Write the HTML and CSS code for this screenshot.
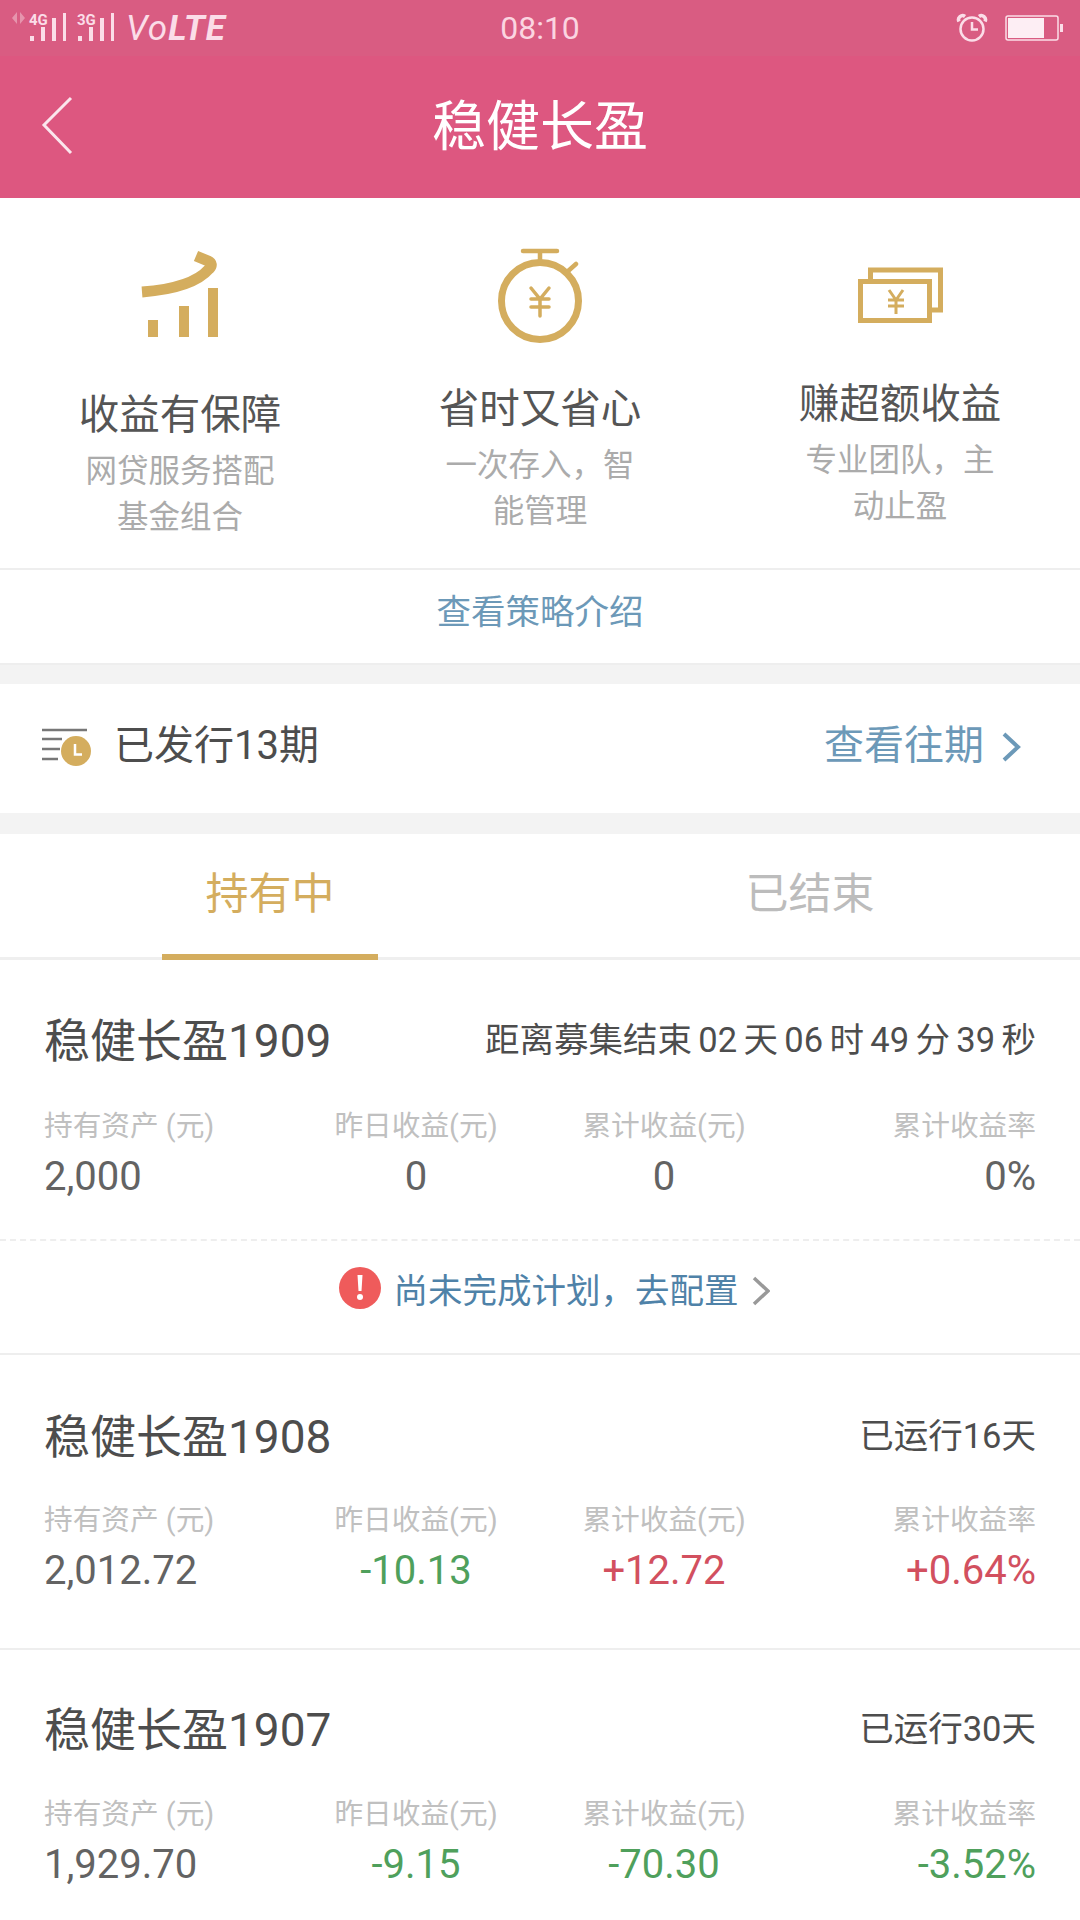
FILE: index.html
```html
<!DOCTYPE html>
<html lang="zh-CN">
<head>
    <meta charset="UTF-8">
    <meta name="viewport" content="width=device-width, initial-scale=1.0">
    <title>稳健长盈</title>
    <link rel="stylesheet" href="styles.css">
</head>
<body>

    <div class="statusbar">
        <div class="status-left">
            <svg class="net-arrows" width="14" height="12" viewBox="0 0 14 12"><path d="M5 0v12L0 6zM8 0l5 6-5 6z" fill="#fff" opacity=".35"/></svg>
            <div class="signal">
                <span class="signal-name">4G</span>
                <svg width="38" height="30" viewBox="0 0 38 30"><path d="M2 23h4v5H2zM13 14h4v14h-4zM24 5h4v23h-4zM35 0h3v28h-3z" fill="#fbdde8"/></svg>
            </div>
            <div class="signal">
                <span class="signal-name">3G</span>
                <svg width="38" height="30" viewBox="0 0 38 30"><path d="M2 23h4v5H2zM13 14h4v14h-4zM24 5h4v23h-4zM35 0h3v28h-3z" fill="#fbdde8"/></svg>
            </div>
            <span class="volte">Vo<b>LTE</b></span>
        </div>
        <div class="status-time">08:10</div>
        <div class="status-right">
            <svg width="32" height="30" viewBox="0 0 32 30" fill="none" stroke="#fbdde8"><circle cx="16" cy="16" r="11.5" stroke-width="2.5"/><path d="M16 9v7.5h6" stroke-width="2.5"/><path d="M3 8.500a4 4 0 0 1 6-5M29 8.500a4 4 0 0 0-6-5" stroke-width="3.500"/></svg>
            <svg width="58" height="26" viewBox="0 0 58 26"><rect x="1" y="1" width="52" height="24" rx="2" fill="none" stroke="#fbdde8" stroke-width="1.500"/><rect x="3" y="3" width="36" height="20" fill="#fdeef4"/><rect x="55" y="9" width="3" height="8" fill="#fbdde8"/></svg>
        </div>
    </div>

    <div class="header">
        <svg class="back" width="34" height="62" viewBox="0 0 34 62"><path d="M30 3 3 30l27 28" fill="none" stroke="#fbe6ed" stroke-width="3"/></svg>
        <h1>稳健长盈</h1>
    </div>

    <div class="features">
        <div class="feature feature-a">
            <svg width="80" height="100" viewBox="140 245 80 100" fill="#d4ad5e">
                <path d="M148 320h10v17h-10zM179 306h10v31h-10zM208 288h10v49h-10z"/>
                <path d="M196 256l12 5q6 3 1 8c-13 15-41 21-67 23" fill="none" stroke="#d4ad5e" stroke-width="11"/>
            </svg>
            <h3>收益有保障</h3>
            <p>网贷服务搭配基金组合</p>
        </div>
        <div class="feature feature-b">
            <svg width="90" height="100" viewBox="495 245 90 100" fill="none" stroke="#d4ad5e" stroke-linecap="round">
                <circle cx="540" cy="301" r="38.500" stroke-width="7"/>
                <path d="M523 251h34M540 251v10M567 272l9-8" stroke-width="4.500"/>
                <path d="M531 288l9 11 9-11M531 299h18M531 307h18M540 299v17" stroke-width="3.500"/>
            </svg>
            <h3>省时又省心</h3>
            <p>一次存入，智能管理</p>
        </div>
        <div class="feature feature-c">
            <svg width="90" height="100" viewBox="855 245 90 100" fill="none" stroke="#d4ad5e">
                <path d="M870.500 279v-9h70v40h-9" stroke-width="5"/>
                <rect x="860.500" y="281.500" width="69" height="39" stroke-width="5"/>
                <path d="M889 290l7 10 7-10M888 300h16M888 306h16M896 300v14" stroke-width="3"/>
            </svg>
            <h3>赚超额收益</h3>
            <p>专业团队，主动止盈</p>
        </div>
    </div>
    <div class="strategy-link">查看策略介绍</div>

    <div class="issued">
        <svg class="issued-icon" width="54" height="54" viewBox="40 724 54 54">
            <path d="M42 730h45M42 739h20M42 749h18M42 759h16" stroke="#777" stroke-width="2.500" fill="none"/>
            <circle cx="76" cy="751" r="15" fill="#d4ad5e"/>
            <path d="M75 744v10.500h7" stroke="#fff" stroke-width="2.500" fill="none"/>
        </svg>
        <span class="issued-text">已发行13期</span>
        <span class="issued-more">查看往期
            <svg width="20" height="32" viewBox="0 0 20 32"><path d="M3 3l14 13L3 29" fill="none" stroke="#6c99b8" stroke-width="4"/></svg>
        </span>
    </div>

    <div class="tabs">
        <div class="tab active">持有中</div>
        <div class="tab">已结束</div>
    </div>

    <div class="card card-first">
        <div class="card-head">
            <h2>稳健长盈1909</h2>
            <span class="card-note countdown">距离募集结束 02 天 06 时 49 分 39 秒</span>
        </div>
        <div class="stats">
            <div class="stat"><span>持有资产 (元)</span><strong>2,000</strong></div>
            <div class="stat"><span>昨日收益(元)</span><strong>0</strong></div>
            <div class="stat"><span>累计收益(元)</span><strong>0</strong></div>
            <div class="stat"><span>累计收益率</span><strong>0%</strong></div>
        </div>
    </div>
    <div class="plan-alert">
        <svg width="42" height="42" viewBox="0 0 42 42"><circle cx="21" cy="21" r="21" fill="#ef5b5b"/><path d="M18.500 8h5l-1 16h-3z" fill="#fff"/><circle cx="21" cy="30" r="3" fill="#fff"/></svg>
        <span>尚未完成计划，去配置</span>
        <svg class="plan-arrow" width="18" height="30" viewBox="0 0 18 30"><path d="M2 2l14 13L2 28" fill="none" stroke="#999" stroke-width="3.500"/></svg>
    </div>

    <div class="card">
        <div class="card-head">
            <h2>稳健长盈1908</h2>
            <span class="card-note">已运行16天</span>
        </div>
        <div class="stats">
            <div class="stat"><span>持有资产 (元)</span><strong>2,012.72</strong></div>
            <div class="stat"><span>昨日收益(元)</span><strong class="down">-10.13</strong></div>
            <div class="stat"><span>累计收益(元)</span><strong class="up">+12.72</strong></div>
            <div class="stat"><span>累计收益率</span><strong class="up">+0.64%</strong></div>
        </div>
    </div>

    <div class="card">
        <div class="card-head">
            <h2>稳健长盈1907</h2>
            <span class="card-note">已运行30天</span>
        </div>
        <div class="stats">
            <div class="stat"><span>持有资产 (元)</span><strong>1,929.70</strong></div>
            <div class="stat"><span>昨日收益(元)</span><strong class="down">-9.15</strong></div>
            <div class="stat"><span>累计收益(元)</span><strong class="down">-70.30</strong></div>
            <div class="stat"><span>累计收益率</span><strong class="down">-3.52%</strong></div>
        </div>
    </div>

</body>
</html>
```

FILE: styles.css
```css
/* Página do produto */
* {
    box-sizing: border-box;
}

html, body {
    height: 1920px;
    overflow: hidden;
}

body {
    font-family: Roboto, "Noto Sans CJK SC", sans-serif;
    background: #f3f3f3;
    margin: 0;
    padding: 0;
    color: #4d4d4d;
}

h1, h2, h3, p {
    margin: 0;
    font-weight: 400;
}

/* Barra de status */
.statusbar {
    display: grid;
    grid-template-columns: 1fr auto 1fr;
    align-items: center;
    height: 56px;
    padding: 0 12px;
    background: #d95c82;
}

.status-left {
    display: flex;
    align-items: flex-start;
    height: 56px;
    padding-top: 12px;
}

.net-arrows {
    margin-right: 2px;
}

.signal {
    position: relative;
    width: 48px;
    height: 30px;
}

.signal svg {
    position: absolute;
    left: 0;
    top: 1px;
}

.signal-name {
    position: absolute;
    left: 1px;
    top: 2px;
    font-size: 15px;
    line-height: 12px;
    font-weight: 700;
    color: #fbdde8;
}

.volte {
    margin-left: 2px;
    padding-top: 1px;
    font-size: 35px;
    line-height: 32px;
    font-style: italic;
    letter-spacing: 1px;
    color: #fbdde8;
}

.status-time {
    font-size: 32px;
    color: #fbd5e1;
}

.status-right {
    display: flex;
    justify-content: flex-end;
    align-items: center;
    gap: 17px;
    padding-bottom: 1px;
    margin-right: 5px;
}

/* Cabeçalho */
.header {
    position: relative;
    height: 142px;
    background: #dd5780;
    padding-top: 33px;
    text-align: center;
}

.header h1 {
    font-size: 54px;
    line-height: 78px;
    color: #fff;
}

.back {
    position: absolute;
    left: 41px;
    top: 39px;
}

/* Vantagens */
.features {
    display: grid;
    grid-template-columns: repeat(3, 1fr);
    height: 372px;
    padding-top: 47px;
    text-align: center;
    background: #fff;
    border-bottom: 2px solid #eee;
}

.feature {
    display: flex;
    flex-direction: column;
    align-items: center;
}

.feature svg {
    flex: none;
}

.feature h3 {
    font-size: 40.500px;
    line-height: 60px;
    color: #555;
}

.feature p {
    width: 200px;
    margin-top: 4px;
    font-size: 31.500px;
    line-height: 46px;
    color: #ababab;
}

.feature-a h3 { margin-top: 40px; }
.feature-b h3 { margin-top: 34px; }
.feature-c h3 { margin-top: 29px; }

.strategy-link {
    height: 95px;
    padding-top: 18px;
    font-size: 34.500px;
    line-height: 48px;
    text-align: center;
    color: #6c99b8;
    background: #fff;
    border-bottom: 2px solid #eee;
}

/* Períodos emitidos */
.issued {
    display: flex;
    align-items: center;
    height: 129px;
    padding: 0 59px 14px 40px;
    margin-top: 19px;
    background: #fff;
}

.issued-icon {
    margin-top: 19px;
}

.issued-text {
    margin-left: 20px;
    font-size: 40px;
}

.issued-more {
    display: flex;
    align-items: center;
    gap: 17px;
    margin-left: auto;
    font-size: 40px;
    color: #6c99b8;
}

.issued-more svg {
    margin-top: 11px;
}

/* Abas */
.tabs {
    display: grid;
    grid-template-columns: 1fr 1fr;
    height: 126px;
    margin-top: 21px;
    background: #fff;
    border-bottom: 3px solid #efefef;
}

.tab {
    position: relative;
    padding-top: 32px;
    font-size: 43px;
    line-height: 56px;
    text-align: center;
    color: #bcbcbc;
}

.tab.active {
    color: #d4ad5e;
}

.tab.active::after {
    content: "";
    position: absolute;
    left: 162px;
    bottom: -3px;
    width: 216px;
    height: 6px;
    background: #d4ad5e;
}

/* Cartões */
.card {
    height: 295px;
    padding: 48px 44px 0;
    background: #fff;
    border-bottom: 2px solid #eee;
}

.card-first {
    height: 281px;
    padding-top: 47px;
    border-bottom: 2px dashed #eee;
}

.card + .card {
    height: 320px;
    padding-top: 46px;
}

.card-head {
    display: flex;
    justify-content: space-between;
    align-items: center;
    height: 60px;
}

.card-head h2 {
    font-size: 46px;
    color: #4d4d4d;
}

.card-note {
    font-size: 34.500px;
    color: #4d4d4d;
}

.countdown {
    word-spacing: -2.200px;
}

.stats {
    display: grid;
    grid-template-columns: repeat(4, 1fr);
    margin-top: 35px;
    text-align: center;
}

.card-first .stats {
    margin-top: 37px;
}

.card + .card .stats {
    margin-top: 36px;
}

.stat:first-child {
    text-align: left;
}

.stat:last-child {
    text-align: right;
}

.stat span {
    display: block;
    font-size: 28.700px;
    line-height: 44px;
    color: #c0c0c0;
}

.stat strong {
    display: block;
    margin-top: 4px;
    font-size: 40px;
    line-height: 50px;
    font-weight: 400;
    color: #636363;
}

.stat strong.up {
    color: #d2505f;
}

.stat strong.down {
    color: #4fa05c;
}

/* Aviso de plano */
.plan-alert {
    display: flex;
    justify-content: center;
    align-items: center;
    height: 114px;
    padding: 0 0 18px 28px;
    font-size: 34.500px;
    color: #4f82a8;
    background: #fff;
    border-bottom: 2px solid #eee;
}

.plan-alert span {
    margin-left: 13px;
}

.plan-arrow {
    margin-left: 13px;
    margin-top: 6px;
}
```
